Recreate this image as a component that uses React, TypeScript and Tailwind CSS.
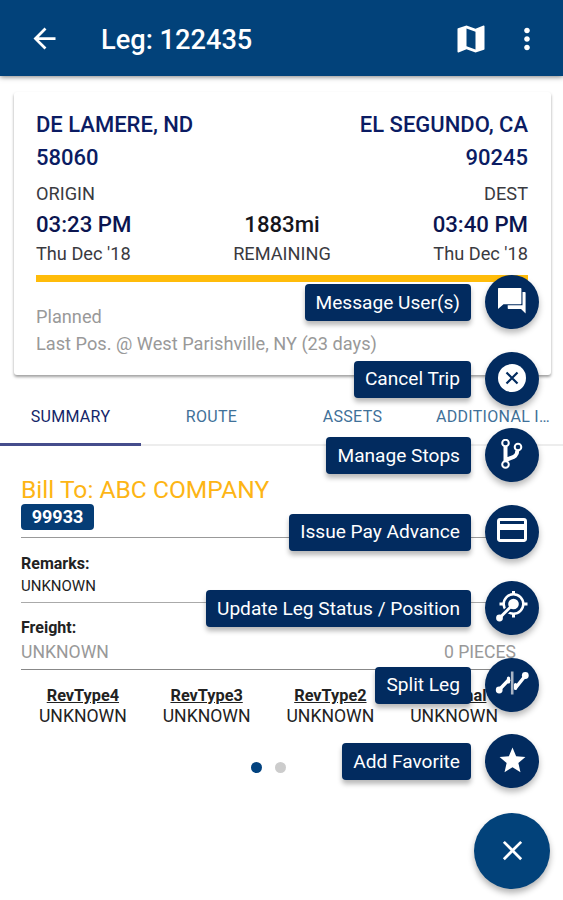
import type { ReactNode } from 'react';
import { MdArrowBack, MdClose, MdMap, MdMoreVert, MdPayment, MdStar } from 'react-icons/md';

interface Action {
  label: string;
  icon: ReactNode;
}

const MessageIcon = () => (
  <svg width="30" height="30" viewBox="0 0 30 30" fill="#fff">
    <path d="M1.700 1h22q.7 0 .7.7v14.800q0 .7-.7.7H6.500L1 22V1.700q0-.7.7-.7z" />
    <path d="M25.500 5h2.300q.8 0 .8.8V26.500L24 22H11.500q-.8 0-.8-.8v-2.900H25.500z" />
  </svg>
);

const CancelIcon = () => (
  <svg width="30" height="30" viewBox="0 0 30 30">
    <circle cx="15" cy="14" r="14" fill="#fff" />
    <path d="M9.500 8.500l11 11M20.500 8.500l-11 11" stroke="#022b5f" strokeWidth="2.200" />
  </svg>
);

const BranchIcon = () => (
  <svg width="30" height="32" viewBox="0 0 30 32" fill="none" stroke="#fff">
    <circle cx="8.500" cy="4" r="3.300" strokeWidth="2" />
    <circle cx="8.500" cy="25.500" r="3.300" strokeWidth="2" />
    <circle cx="21" cy="8" r="3.300" strokeWidth="2" />
    <path d="M8.500 7.500v14.500M20.300 11.500c0 7-5.500 6.500-11.300 9.500" strokeWidth="4" />
  </svg>
);

const PositionIcon = () => (
  <svg width="34" height="34" viewBox="0 0 34 34" fill="none" stroke="#fff">
    <circle cx="18.500" cy="13" r="9.800" strokeWidth="2.500" />
    <path d="M18.500 0v4M32.500 13h-4M18.500 26.500v-4M4.500 13h4" strokeWidth="3" />
    <path d="M14.500 17L4.500 27" stroke="#022b5f" strokeWidth="6" />
    <path d="M18.500 13L4.500 27" strokeWidth="3" />
    <circle cx="18.500" cy="13" r="5.300" fill="#fff" stroke="none" />
    <circle cx="4.500" cy="27" r="3.400" fill="#fff" stroke="none" />
  </svg>
);

const SplitIcon = () => (
  <svg width="34" height="30" viewBox="0 0 34 30" fill="none" stroke="#fff">
    <path d="M4 20l10.500-11M20.500 18L30.500 5.500" strokeWidth="3.400" />
    <path d="M13.500 8v4M20.500 14.500v4" strokeWidth="3.200" strokeLinecap="round" />
    <circle cx="4.200" cy="20" r="3.400" fill="#fff" stroke="none" />
    <circle cx="30.300" cy="5.500" r="3.400" fill="#fff" stroke="none" />
    <path d="M17.200 1.500v23" stroke="#a9b4c4" strokeWidth="2.600" />
  </svg>
);

const actions: Action[] = [
  { label: 'Message User(s)', icon: <MessageIcon /> },
  { label: 'Cancel Trip', icon: <CancelIcon /> },
  { label: 'Manage Stops', icon: <BranchIcon /> },
  { label: 'Issue Pay Advance', icon: <MdPayment size={36} className="mb-1" /> },
  { label: 'Update Leg Status / Position', icon: <PositionIcon /> },
  { label: 'Split Leg', icon: <SplitIcon /> },
  { label: 'Add Favorite', icon: <MdStar size={31} className="mb-0.5" /> },
];

const tabs = ['SUMMARY', 'ROUTE', 'ASSETS', 'ADDITIONAL INFO'];
const revTypes = ['RevType4', 'RevType3', 'RevType2', 'Terminal'];

const Header = () => (
  <header className="relative flex h-[76px] items-center bg-[#02427a] pr-[19px] pl-[28px] text-white shadow-[0_1px_5px_rgba(0,0,0,0.5)]">
    <MdArrowBack size={33} />
    <h1 className="ml-[40px] flex-1 pt-[3px] text-[27.2px] leading-8 font-medium">Leg: 122435</h1>
    <MdMap size={36} className="mt-px" />
    <MdMoreVert size={34} className="mt-px ml-[21px]" />
  </header>
);

const TripCard = () => (
  <section className="mr-[12px] ml-[14px] mt-4 h-[283px] rounded-[3px] bg-white pr-[23px] pl-[22px] pt-4 text-[#3a3a3f] shadow-[0_2px_3px_rgba(0,0,0,0.38)]">
    <div className="flex justify-between text-[22px] leading-[33px] font-medium text-[#0b1c63]">
      <div>
        <p>DE LAMERE, ND</p>
        <p>58060</p>
      </div>
      <div className="text-right">
        <p>EL SEGUNDO, CA</p>
        <p>90245</p>
      </div>
    </div>
    <div className="mt-[5px] grid grid-cols-3 text-[18.2px] leading-[30px]">
      <div>
        <p>ORIGIN</p>
        <p className="text-[22.2px] font-medium text-[#0b1550]">03:23 PM</p>
        <p>Thu Dec '18</p>
      </div>
      <div className="pt-[30px] text-center">
        <p className="text-[22.2px] font-medium text-[#15151c]">1883mi</p>
        <p>REMAINING</p>
      </div>
      <div className="text-right">
        <p>DEST</p>
        <p className="text-[22.2px] font-medium text-[#0b1550]">03:40 PM</p>
        <p>Thu Dec '18</p>
      </div>
    </div>
    <div className="mt-[6px] h-[7px] bg-[#ffbc0a]" />
    <div className="mt-[21px] text-[18.2px] leading-[27px] text-[#999]">
      <p>Planned</p>
      <p>Last Pos. @ West Parishville, NY (23 days)</p>
    </div>
  </section>
);

const Tabs = () => (
  <nav className="mt-[15px] flex h-[56px] border-b-2 border-[#ededed]">
    {tabs.map((tab, i) => (
      <div
        key={tab}
        className={`h-[56px] w-[141px] shrink-0 pt-[15px] text-center text-base leading-[24px] tracking-[0.3px] ${
          i === 0 ? 'border-b-3 border-[#454d8c] text-[#142669]' : 'text-[#3f7199]'
        } ${i === 3 ? 'pr-[9px] pl-[13px]' : 'px-[10px]'}`}
      >
        <p className="truncate">{tab}</p>
      </div>
    ))}
  </nav>
);

const Summary = () => (
  <main className="mt-[31px] ml-[21px] w-[495px] text-[#222]">
    <h2 className="text-[24.6px] leading-[26px] text-[#fdb515]">Bill To: ABC COMPANY</h2>
    <div className="mt-[1px] flex h-[26px] w-[73px] items-center justify-center rounded-[4px] bg-[#053d76] pb-[1px] text-[18px] font-bold text-white">
      99933
    </div>
    <div className="mt-[7px] border-t border-[#999] pt-[15px]">
      <p className="text-base leading-[22px] font-bold">Remarks:</p>
      <p className="text-[15px] leading-[22px]">UNKNOWN</p>
    </div>
    <div className="mt-[5px] border-t border-[#aaa] pt-[14px]">
      <p className="text-base leading-[22px] font-bold">Freight:</p>
      <div className="flex justify-between text-[17.6px] leading-[26px] text-[#999]">
        <span>UNKNOWN</span>
        <span>0 PIECES</span>
      </div>
    </div>
    <div className="mt-[4px] grid grid-cols-4 border-t border-[#888] pt-[16px] text-center leading-5">
      {revTypes.map(type => (
        <div key={type}>
          <p className="text-[16.3px] leading-5 font-bold underline">{type}</p>
          <p className="text-[17.6px] leading-5">UNKNOWN</p>
        </div>
      ))}
    </div>
    <div className="mt-[36px] flex justify-center gap-[13px]">
      <span className="h-[11px] w-[11px] rounded-full bg-[#02427f]" />
      <span className="h-[11px] w-[11px] rounded-full bg-[#ccc]" />
    </div>
  </main>
);

const SpeedDial = () => (
  <div className="absolute top-[275px] right-[13px] flex flex-col items-end text-white">
    <div className="mr-[11px] flex flex-col items-end gap-[22.5px]">
      {actions.map(({ label, icon }) => (
        <div key={label} className="flex h-[54px] items-center gap-[14px]">
          <span className="mt-px flex h-[37px] items-center rounded-[4px] bg-[#022b5f] px-[11px] pt-[1px] text-[19.12px] whitespace-nowrap shadow-[0_4px_5px_rgba(0,0,0,0.28)]">
            {label}
          </span>
          <button type="button" className="flex h-[54px] w-[54px] items-center justify-center rounded-full bg-[#022b5f] shadow-[0_4px_6px_rgba(0,0,0,0.28)]">
            {icon}
          </button>
        </div>
      ))}
    </div>
    <button type="button" className="mt-[25px] flex h-[76px] w-[76px] items-center justify-center rounded-full bg-[#02427a] pb-[2px] shadow-[0_4px_6px_rgba(0,0,0,0.3)]">
      <MdClose size={33} />
    </button>
  </div>
);

export default function App() {
  return (
    <div className="relative h-[900px] w-[563px] overflow-hidden bg-white font-['Roboto',sans-serif]">
      <Header />
      <TripCard />
      <Tabs />
      <Summary />
      <SpeedDial />
    </div>
  );
}
